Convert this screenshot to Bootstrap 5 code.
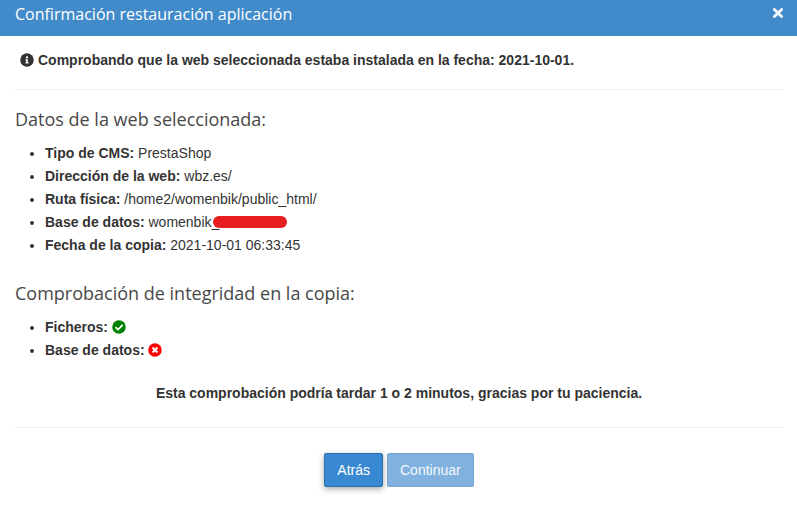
<!DOCTYPE html>
<html lang="es">
<head>
<meta charset="utf-8">
<meta name="viewport" content="width=device-width, initial-scale=1">
<title>Confirmación restauración aplicación</title>
<link href="https://cdn.jsdelivr.net/npm/bootstrap@5.3.0/dist/css/bootstrap.min.css" rel="stylesheet">
<style>
body { font-family: "Liberation Sans", Arial, sans-serif; font-size: 14px; line-height: 20px; color: #333; background: #fff; }
.dialog-head { background: #428bca; color: #fff; height: 36px; padding: 0 13px 8px 15px; }
.dialog-title { font-family: "Open Sans", sans-serif; font-size: 16px; line-height: 28px; font-weight: 400; }
.dialog-close { line-height: 0; }
.dialog-body { padding: 14px 14px 18px 15px; }
.notice { padding: 0 5px; gap: 4px; }
.rule { border-top: 1px solid #eee; opacity: 1; margin: 19px 0 17px; }
.rule-foot { margin: 24px 0 25px; }
.section-title { font-family: "Open Sans", sans-serif; font-size: 18px; line-height: 24px; font-weight: 400; color: #484848; margin-bottom: 11px; }
.facts { padding-left: 30px; line-height: 23px; margin-bottom: 24px; }
.checks { margin-bottom: 21px; }
.state-icon { width: 14px; height: 14px; vertical-align: -2px; }
.redacted { display: inline-block; width: 74px; height: 12px; border-radius: 6px; background: #e71d1f; vertical-align: -1px; margin-left: -6px; }
.btn-dialog { --bs-btn-font-size: 14px; --bs-btn-line-height: 20px; --bs-btn-padding-x: 12px; --bs-btn-padding-y: 6px; --bs-btn-border-radius: 2px;
  --bs-btn-color: #fff; --bs-btn-bg: #3889d1; --bs-btn-border-color: #2a6fae;
  --bs-btn-hover-color: #fff; --bs-btn-hover-bg: #3079bb; --bs-btn-hover-border-color: #2a6fae;
  --bs-btn-disabled-color: #f3f8fc; --bs-btn-disabled-bg: #80b1df; --bs-btn-disabled-border-color: #75a4d0; --bs-btn-disabled-opacity: 1; }
.btn-raised { box-shadow: 0 2px 6px rgba(0, 0, 0, .35); }
</style>
<script src="https://cdn.jsdelivr.net/npm/bootstrap@5.3.0/dist/js/bootstrap.bundle.min.js" defer></script>
</head>
<body>
<header class="dialog-head d-flex align-items-center justify-content-between">
  <h1 class="dialog-title m-0">Confirmación restauración aplicación</h1>
  <button type="button" class="dialog-close btn p-0 border-0" aria-label="Cerrar">
    <svg width="12" height="12" viewBox="0 0 12 12" aria-hidden="true"><path d="M2.4 1.4 9.6 8.6M9.6 1.4 2.4 8.6" stroke="#f5f8fc" stroke-width="2.8" stroke-linecap="round"/></svg>
  </button>
</header>
<main class="dialog-body">
  <p class="notice d-flex align-items-center fw-bold mb-0">
    <svg width="14" height="14" viewBox="0 0 512 512" aria-hidden="true"><circle cx="256" cy="256" r="248" fill="#333"/><path fill="#fff" d="M256 118a42 42 0 1 1 0 84 42 42 0 0 1 0-84zm56 254c0 7-5 12-12 12h-88c-7 0-12-5-12-12v-24c0-7 5-12 12-12h12v-64h-12c-7 0-12-5-12-12v-24c0-7 5-12 12-12h64c7 0 12 5 12 12v100h12c7 0 12 5 12 12z"/></svg>
    <span>Comprobando que la web seleccionada estaba instalada en la fecha: 2021-10-01.</span>
  </p>
  <hr class="rule">
  <h2 class="section-title">Datos de la web seleccionada:</h2>
  <ul class="facts">
    <li><strong>Tipo de CMS:</strong> PrestaShop</li>
    <li><strong>Dirección de la web:</strong> wbz.es/</li>
    <li><strong>Ruta física:</strong> /home2/womenbik/public_html/</li>
    <li><strong>Base de datos:</strong> womenbik_<span class="redacted"></span></li>
    <li><strong>Fecha de la copia:</strong> 2021-10-01 06:33:45</li>
  </ul>
  <h2 class="section-title">Comprobación de integridad en la copia:</h2>
  <ul class="facts checks">
    <li><strong>Ficheros:</strong>
      <svg class="state-icon" viewBox="0 0 512 512" role="img" aria-label="Correcto"><circle cx="256" cy="256" r="248" fill="#008000"/><path d="M126 263 220 351 389 182" fill="none" stroke="#fff" stroke-width="66"/></svg></li>
    <li><strong>Base de datos:</strong>
      <svg class="state-icon" viewBox="0 0 512 512" role="img" aria-label="Error"><circle cx="256" cy="256" r="248" fill="#f00"/><path d="M166 166 346 346M346 166 166 346" fill="none" stroke="#fff" stroke-width="76"/></svg></li>
  </ul>
  <p class="text-center fw-bold mb-0">Esta comprobación podría tardar 1 o 2 minutos, gracias por tu paciencia.</p>
  <hr class="rule rule-foot">
  <div class="d-flex justify-content-center gap-1">
    <button type="button" class="btn btn-dialog btn-raised">Atrás</button>
    <button type="button" class="btn btn-dialog" disabled>Continuar</button>
  </div>
</main>
</body>
</html>
